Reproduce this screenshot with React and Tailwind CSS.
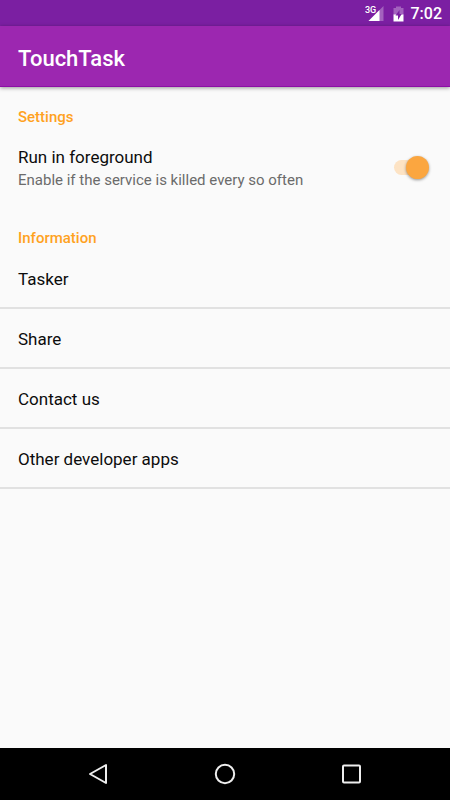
import React from "react";

const links = ["Tasker", "Share", "Contact us", "Other developer apps"];

function StatusBar() {
  return (
    <div className="flex h-[26px] shrink-0 items-center justify-end bg-[#7b1fa2] pt-0.5 pr-2 text-white">
      <svg width="20" height="18" viewBox="0 0 20 18" className="mr-2" aria-label="3G signal">
        <path d="M18.500 1v15H3.500z" fill="#fff" fillOpacity="0.3" />
        <path d="M14.500 5v11H3.500z" fill="#fff" />
        <path d="M0 0h11v7l-2 2H0z" fill="#7b1fa2" />
        <text x="0" y="8" fontSize="9" fontWeight="500" fill="#fff" fontFamily="Roboto, sans-serif">
          3G
        </text>
      </svg>
      <svg width="11" height="17" viewBox="0 0 11 17" className="mr-[7px]" aria-label="Battery charging">
        <path d="M3 0.500h5v1.500h2.500V9H0.500V2H3z" fill="#fff" fillOpacity="0.3" />
        <path d="M0.500 8.500h10v7h-10z" fill="#fff" />
        <path d="M6.500 4L2.500 9.500h2.500v4.500L8.700 8H6.500z" fill="#7b1fa2" />
      </svg>
      <span className="text-base leading-none font-medium">7:02</span>
    </div>
  );
}

function SectionTitle({ children }) {
  return <h2 className="text-[15px] leading-5 font-medium text-[#ffa21f]">{children}</h2>;
}

function NavBar() {
  return (
    <nav className="flex h-[52px] shrink-0 items-center justify-center bg-black text-[#eee]">
      <button className="flex h-full w-[126px] items-center justify-center" aria-label="Back">
        <svg width="24" height="24" viewBox="0 0 24 24" fill="none" stroke="currentColor" strokeWidth="2" strokeLinejoin="round">
          <path d="M19 3v18L3 12z" />
        </svg>
      </button>
      <button className="flex h-full w-[126px] items-center justify-center" aria-label="Home">
        <svg width="24" height="24" viewBox="0 0 24 24" fill="none" stroke="currentColor" strokeWidth="2">
          <circle cx="12" cy="12" r="9.200" />
        </svg>
      </button>
      <button className="flex h-full w-[126px] items-center justify-center" aria-label="Recent apps">
        <svg width="24" height="24" viewBox="0 0 24 24" fill="none" stroke="currentColor" strokeWidth="2">
          <rect x="4" y="3.500" width="17" height="17" rx="1" />
        </svg>
      </button>
    </nav>
  );
}

export default function App() {
  return (
    <div className="flex min-h-screen flex-col bg-[#fafafa] font-[Roboto,sans-serif] text-[#0c0c0c]">
      <StatusBar />
      <header className="z-10 flex h-[61px] shrink-0 items-center border-b border-[#8c0fa5] bg-[#9c27b0] px-[18px] pt-1.5 shadow-[0_1px_4px_rgba(0,0,0,0.4)]">
        <h1 className="text-[22px] leading-7 font-medium text-white">TouchTask</h1>
      </header>
      <main className="flex-1">
        <section className="px-[18px] pt-5">
          <SectionTitle>Settings</SectionTitle>
          <div className="flex items-center justify-between pt-[18px] pr-[5px]">
            <label htmlFor="foreground">
              <span className="block text-[17px] leading-6">Run in foreground</span>
              <span className="block text-[15px] leading-[22px] text-[#6b6b6b]">
                Enable if the service is killed every so often
              </span>
            </label>
            <input
              id="foreground"
              type="checkbox"
              role="switch"
              defaultChecked
              className="relative mb-0.5 h-[15px] w-[33px] shrink-0 appearance-none rounded-full bg-[#fde3c4] before:absolute before:-top-1 before:left-0 before:size-[23px] before:rounded-full before:bg-[#fafafa] before:shadow-[0_1px_3px_rgba(0,0,0,0.4)] checked:before:left-3 checked:before:bg-[#fba640]"
            />
          </div>
        </section>
        <section className="pt-[37px]">
          <div className="px-[18px]">
            <SectionTitle>Information</SectionTitle>
          </div>
          <ul className="pt-px">
            {links.map((label) => (
              <li key={label} className="border-b-2 border-[#e1e1e1]">
                <a href="#" className="flex h-[58px] items-center px-[18px] pt-1 text-[17px]">
                  {label}
                </a>
              </li>
            ))}
          </ul>
        </section>
      </main>
      <NavBar />
    </div>
  );
}
